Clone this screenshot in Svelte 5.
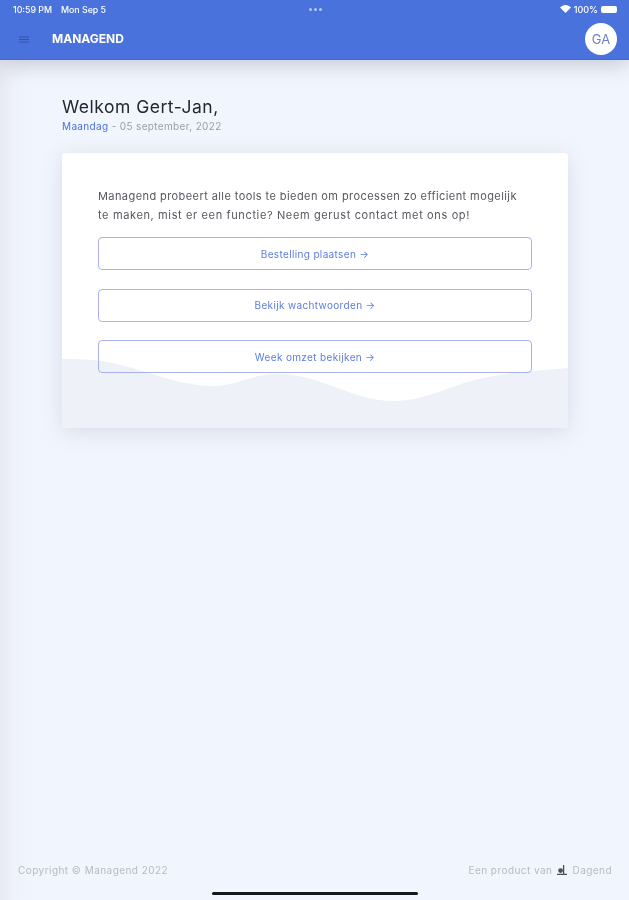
<script>
  const actions = ['Bestelling plaatsen', 'Bekijk wachtwoorden', 'Week omzet bekijken'];
</script>

<div class="page">
  <header class="header">
    <div class="status">
      <div class="status-left"><span>10:59 PM</span><span>Mon Sep 5</span></div>
      <div class="dots"><i></i><i></i><i></i></div>
      <div class="status-right">
        <svg class="wifi" width="11" height="8" viewBox="0 0 11 8"><path d="M5.5 8 0 2.6C3.2-.8 7.8-.8 11 2.6Z" fill="#fff"/></svg>
        <span>100%</span>
        <span class="battery"></span>
      </div>
    </div>
    <div class="bar">
      <svg class="menu" width="10" height="7" viewBox="0 0 10 7"><path d="M0 1h10M0 3.5h10M0 6h10" stroke="#35549f" stroke-width="1"/></svg>
      <span class="brand">MANAGEND</span>
      <span class="avatar">GA</span>
    </div>
  </header>

  <main class="main">
    <h1>Welkom Gert-Jan,</h1>
    <p class="date"><span class="day">Maandag</span> - 05 september, 2022</p>

    <section class="card">
      <svg class="wave" viewBox="0 0 506 72" preserveAspectRatio="none">
        <path d="M0 3C15 3 30 3 45 6C80 12 115 30 151 30C175 30 190 18 215 18C260 18 290 45 331 45C365 45 385 30 421 22C450 16 480 14 506 12V72H0Z" fill="#eef1f7"/>
      </svg>
      <p class="intro">Managend probeert alle tools te bieden om processen zo efficient mogelijk<br /><span class="intro-end">te maken, mist er een functie? Neem gerust contact met ons op!</span></p>
      <div class="actions">
        {#each actions as label}
          <button class="action">{label} →</button>
        {/each}
      </div>
    </section>
  </main>

  <footer class="footer">
    <span>Copyright © Managend 2022</span>
    <span class="maker">Een product van
      <svg width="10" height="10" viewBox="0 0 10 10"><circle cx="3.6" cy="5.6" r="2.4" fill="#4a4f5c"/><path d="M6.6 0v9.5M0 9.4h10" stroke="#4a4f5c" stroke-width="1.3"/></svg>
      Dagend</span>
  </footer>
  <div class="home"></div>
</div>

<style>
  :global(body) {
    margin: 0;
    background: #f1f5fd;
  }
  .page {
    position: relative;
    display: flex;
    flex-direction: column;
    height: 900px;
    overflow: hidden;
    font-family: Inter, "Liberation Sans", sans-serif;
    background: linear-gradient(90deg, #e6e9f1 0, #eef1f9 12px, #f1f5fd 28px);
    filter: blur(0.6px);
  }
  .header {
    position: relative;
    z-index: 1;
    height: 60px;
    box-sizing: border-box;
    flex: none;
    background: #4a72dc;
    border-bottom: 1px solid #3f68d8;
    box-shadow: 0 3px 22px rgba(60, 65, 85, 0.28);
    color: #fff;
    padding: 3px 12px 0 13px;
  }
  .status {
    display: grid;
    grid-template-columns: 1fr auto 1fr;
    align-items: center;
    height: 12px;
    font-size: 8.8px;
    font-weight: 500;
  }
  .status-left {
    display: flex;
    gap: 9px;
  }
  .dots {
    display: flex;
    gap: 2px;
  }
  .dots i {
    width: 3px;
    height: 3px;
    border-radius: 50%;
    background: #b9c9f2;
  }
  .status-right {
    display: flex;
    justify-content: flex-end;
    align-items: center;
    gap: 3px;
    font-size: 9px;
  }
  .battery {
    width: 16px;
    height: 7px;
    background: #fff;
    border-radius: 2px;
  }
  .bar {
    display: flex;
    align-items: center;
    height: 33px;
    margin-top: 7px;
  }
  .menu {
    margin: 1px 0 0 6px;
  }
  .brand {
    margin-left: 23px;
    font-size: 12px;
    font-weight: 700;
  }
  .avatar {
    margin-left: auto;
    width: 32px;
    height: 32px;
    border-radius: 50%;
    background: #fff;
    color: #6d83c6;
    font-size: 13px;
    display: flex;
    align-items: center;
    justify-content: center;
  }
  .main {
    flex: 1;
    padding: 36px 61px 0 62px;
  }
  h1 {
    margin: 0;
    font-size: 17.5px;
    line-height: 22px;
    font-weight: 400;
    color: #25272d;
    letter-spacing: 0.5px;
  }
  .date {
    margin: 1px 0 0;
    font-size: 10px;
    line-height: 15px;
    color: #9a9da6;
    letter-spacing: 0.35px;
  }
  .day {
    color: #4a72dc;
  }
  .card {
    position: relative;
    margin-top: 19px;
    height: 275px;
    box-sizing: border-box;
    padding: 34px 36px 0;
    background: #fff;
    border-radius: 3px;
    box-shadow: 0 4px 22px rgba(70, 80, 110, 0.14);
  }
  .wave {
    position: absolute;
    left: 0;
    right: 0;
    bottom: 0;
    width: 100%;
    height: 72px;
    border-radius: 0 0 3px 3px;
  }
  .intro {
    position: relative;
    margin: 0;
    font-size: 11px;
    line-height: 19px;
    color: #55585f;
    letter-spacing: 0.42px;
    white-space: nowrap;
  }
  .intro-end {
    letter-spacing: 0.63px;
  }
  .actions {
    position: relative;
    display: flex;
    flex-direction: column;
    gap: 18.5px;
    margin-top: 12px;
  }
  .action {
    height: 33px;
    padding: 0;
    border: 1px solid #a9b2ee;
    border-radius: 4px;
    background: transparent;
    color: #5d7ddd;
    font: inherit;
    font-size: 10px;
    letter-spacing: 0.35px;
  }
  .footer {
    display: flex;
    justify-content: space-between;
    padding: 0 17px 0 18px;
    margin-bottom: 22px;
    font-size: 10px;
    line-height: 16px;
    letter-spacing: 0.45px;
    color: #b7bac2;
  }
  .maker {
    display: flex;
    align-items: center;
    gap: 5px;
  }
  .home {
    position: absolute;
    left: 212px;
    bottom: 5px;
    width: 206px;
    height: 3px;
    border-radius: 2px;
    background: #15171c;
  }
</style>
